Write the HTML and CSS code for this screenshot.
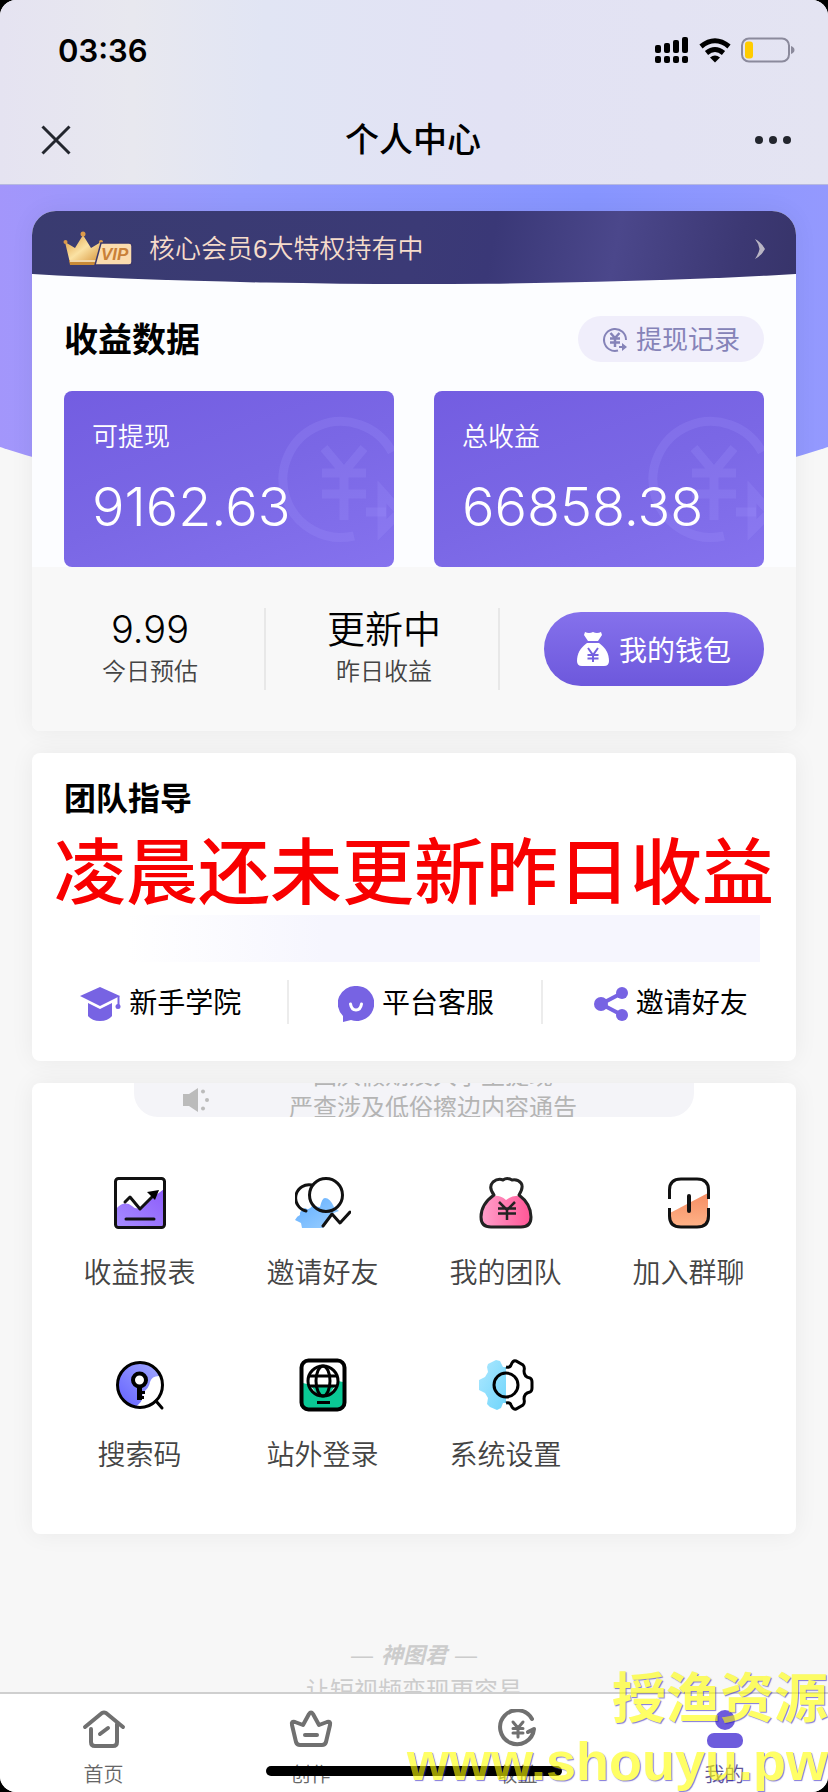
FILE: index.html
```html
<!DOCTYPE html>
<html lang="zh-CN">
<head>
    <meta charset="UTF-8">
    <meta name="viewport" content="width=device-width, initial-scale=1">
    <title>个人中心</title>
    <link rel="stylesheet" href="styles.css">
</head>
<body>
<div class="page">
    <header class="header">
        <div class="status-bar">
            <span class="time">03:36</span>
            <div class="status-icons">
                <svg width="34" height="27" viewBox="0 0 34 27">
                    <rect x="0" y="8" width="6" height="8" rx="2"/>
                    <rect x="9" y="6" width="6" height="10" rx="2"/>
                    <rect x="18" y="3" width="6" height="13" rx="2"/>
                    <rect x="27" y="0" width="6" height="16" rx="2"/>
                    <rect x="0" y="19" width="6" height="7" rx="2"/>
                    <rect x="9" y="19" width="6" height="7" rx="2"/>
                    <rect x="18" y="19" width="6" height="7" rx="2"/>
                    <rect x="27" y="19" width="6" height="7" rx="2"/>
                </svg>
                <svg width="32" height="25" viewBox="0 0 32 25">
                    <g fill="none" stroke="#000" stroke-width="5">
                        <path d="M2 8.500Q16 -3 30 8.500"/>
                        <path d="M7.500 15Q16 8 24.500 15"/>
                    </g>
                    <path d="M11 19.500Q16 15.500 21 19.500L16 24.500Z"/>
                </svg>
                <svg width="54" height="26" viewBox="0 0 54 26">
                    <rect x="1" y="1.500" width="47" height="23" rx="7" fill="none" stroke="#8b8a9c" stroke-width="2"/>
                    <rect x="4" y="4.500" width="8" height="17" rx="3" fill="#fc0"/>
                    <path d="M50 9q3.500 1.500 3.500 4t-3.500 4z" fill="#8b8a9c"/>
                </svg>
            </div>
        </div>
        <div class="nav-bar">
            <button class="nav-btn" type="button" aria-label="关闭">
                <svg width="32" height="32" viewBox="0 0 32 32"><path d="M2.500 2.500l27 27M29.500 2.500l-27 27" stroke="#23262e" stroke-width="3"/></svg>
            </button>
            <h1 class="nav-title">个人中心</h1>
            <button class="nav-btn" type="button" aria-label="更多">
                <svg width="38" height="10" viewBox="0 0 38 10" fill="#23262e"><circle cx="5" cy="5" r="4"/><circle cx="19" cy="5" r="4"/><circle cx="33" cy="5" r="4"/></svg>
            </button>
        </div>
    </header>

    <main class="content">
        <!-- 收益数据 -->
        <section class="card income">
            <a class="vip" href="#">
                <svg width="70" height="38" viewBox="0 0 70 38">
                    <defs>
                        <linearGradient id="gold" x1="0" y1="0" x2="1" y2="1">
                            <stop offset="0" stop-color="#dd9a3c"/>
                            <stop offset=".5" stop-color="#fbe2a4"/>
                            <stop offset="1" stop-color="#d59035"/>
                        </linearGradient>
                    </defs>
                    <path d="M2 12L12 18L20 5L28 18L38 12L33 33H7Z" fill="url(#gold)"/>
                    <path d="M6 30h28l-1 5H7z" fill="#c98a38"/>
                    <path d="M7 31h26" stroke="#fff1cf" stroke-width="1.500"/>
                    <circle cx="20" cy="4" r="2.500" fill="#dc9a4a"/>
                    <circle cx="2.500" cy="12" r="2" fill="#dc9a4a"/>
                    <circle cx="38" cy="12" r="2" fill="#dc9a4a"/>
                    <path d="M38 13h28q3 0 3 3v16q0 3-3 3H32z" fill="#fbdcae" stroke="#3a376c" stroke-width="1.500"/>
                    <text class="vip-mark" x="38" y="30">VIP</text>
                </svg>
                <span class="vip-text">核心会员6大特权持有中</span>
                <svg width="12" height="20" viewBox="0 0 12 20"><path d="M1 0Q7 3 11 10Q7 17 1 20Q5 14 5.500 10Q5 5 1 0Z" fill="#b9b5c4"/></svg>
            </a>
            <div class="income-body">
                <div class="income-head">
                    <h2 class="income-title">收益数据</h2>
                    <a class="record" href="#">
                        <svg width="26" height="26" viewBox="0 0 26 26" fill="none" stroke="#8583b8" stroke-width="2">
                            <path d="M16 23.500A11 11 0 1 1 24 13"/>
                            <path d="M8.500 6l4.500 5l4.500-5M13 11v9M8 11.500h10M8 15.500h10" stroke-width="2.500"/>
                            <path d="M17 20h4"/>
                            <path d="M20 16l5 4l-5 4z" fill="#8583b8" stroke="none"/>
                        </svg>
                        提现记录
                    </a>
                </div>
                <div class="amounts">
                    <div class="amount">
                        <svg class="amount-mark" width="116" height="130" viewBox="0 0 116 130">
                            <path d="M76 122A58 58 0 1 1 114 38"/>
                            <path d="M46 34l20 24l20-24M66 58v48M44 59h44M44 80h44"/>
                            <path d="M88 98h20"/>
                            <path d="M104 78v38l18-18z"/>
                        </svg>
                        <span class="amount-label">可提现</span>
                        <span class="amount-value">9162.63</span>
                    </div>
                    <div class="amount">
                        <svg class="amount-mark" width="116" height="130" viewBox="0 0 116 130">
                            <path d="M76 122A58 58 0 1 1 114 38"/>
                            <path d="M46 34l20 24l20-24M66 58v48M44 59h44M44 80h44"/>
                            <path d="M88 98h20"/>
                            <path d="M104 78v38l18-18z"/>
                        </svg>
                        <span class="amount-label">总收益</span>
                        <span class="amount-value">66858.38</span>
                    </div>
                </div>
            </div>
            <div class="stats">
                <div class="stat">
                    <span class="stat-value">9.99</span>
                    <span class="stat-label">今日预估</span>
                </div>
                <div class="stat">
                    <span class="stat-value">更新中</span>
                    <span class="stat-label">昨日收益</span>
                </div>
                <div class="wallet-box">
                    <button class="wallet" type="button">
                        <svg width="32" height="36" viewBox="0 0 32 36">
                            <path d="M8 1q4 2 8 0q4 2 8 0l1 3l-4 6H11L7 4z" fill="#fff"/>
                            <path d="M10 12h12c7 5 10 11 10 18q0 5-5 5H5q-5 0-5-5C0 23 3 17 10 12Z" fill="#fff"/>
                            <path d="M11 17l5 7l5-7M16 24v7M10.500 24h11M10.500 27.500h11" fill="none" stroke="#7562e0" stroke-width="2"/>
                        </svg>
                        我的钱包
                    </button>
                </div>
            </div>
        </section>

        <!-- 团队指导 -->
        <section class="card team">
            <h2 class="team-title">团队指导</h2>
            <p class="team-notice">凌晨还未更新昨日收益</p>
            <div class="team-strip"></div>
            <div class="links">
                <a class="link" href="#">
                    <svg width="42" height="36" viewBox="0 0 42 36" fill="#7763e3">
                        <path d="M21 1L41 10L21 20L1 10Z"/>
                        <path d="M9 17l12 6l12-6v13q-4 5-12 5t-12-5z"/>
                        <path d="M39.500 10v12" stroke="#7763e3" stroke-width="2"/>
                        <circle cx="39" cy="20.500" r="2.500"/>
                    </svg>
                    新手学院
                </a>
                <a class="link" href="#">
                    <svg width="36" height="36" viewBox="0 0 36 36">
                        <path d="M18 0A17.500 17.500 0 1 1 13 34L5 36V30A17.500 17.500 0 0 1 18 0Z" fill="#7763e3"/>
                        <path d="M12.500 18q1 6 5.500 6t5.500-6" fill="none" stroke="#fff" stroke-width="3" stroke-linecap="round"/>
                    </svg>
                    平台客服
                </a>
                <a class="link" href="#">
                    <svg width="34" height="36" viewBox="0 0 34 36" fill="#7763e3">
                        <path d="M28 7L7 18L28 29" fill="none" stroke="#7763e3" stroke-width="4"/>
                        <circle cx="28" cy="7" r="6"/><circle cx="7" cy="18" r="7"/><circle cx="28" cy="29" r="6"/>
                    </svg>
                    邀请好友
                </a>
            </div>
        </section>

        <!-- 功能菜单 -->
        <section class="card tools">
            <div class="ticker">
                <svg width="28" height="24" viewBox="0 0 28 24" fill="#bbb">
                    <path d="M1 6h6l9-6v24l-9-6H1z"/>
                    <circle cx="21" cy="3.500" r="2"/><circle cx="25" cy="12" r="2"/><circle cx="21" cy="20.500" r="2"/>
                </svg>
                <div class="ticker-list">
                    <span>国庆假期及大学生提现</span>
                    <span>严查涉及低俗擦边内容通告</span>
                </div>
            </div>
            <nav class="menu">
                <a class="menu-item" href="#">
                    <svg width="56" height="56" viewBox="0 0 56 56">
                        <defs>
                            <linearGradient id="violet" x1="0" y1="1" x2="1" y2="0"><stop offset="0" stop-color="#a68cff"/><stop offset="1" stop-color="#8d5cfa"/></linearGradient>
                        </defs>
                        <path d="M4 34Q12 25 20 31Q26 37 34 29T52 14V51H4Z" fill="url(#violet)"/>
                        <g fill="none" stroke="#111" stroke-width="3" stroke-linecap="round" stroke-linejoin="round">
                            <rect x="3.500" y="3.500" width="49" height="49" rx="3"/>
                            <path d="M13 27l5-5l10 12l15-15M14 44h28"/>
                        </g>
                        <path d="M35 17l12-2l-4 10z"/>
                    </svg>
                    收益报表
                </a>
                <a class="menu-item" href="#">
                    <svg width="56" height="56" viewBox="0 0 56 56">
                        <defs>
                            <linearGradient id="sky" x1="0" y1="0" x2="1" y2="1"><stop offset="0" stop-color="#60adff"/><stop offset="1" stop-color="#9cd0ff"/></linearGradient>
                        </defs>
                        <path d="M10 33q4 3 7-2l8 1q2-9 5-9q5 0 9 9l5 4l-8 3q-7 14-9 14H7l-1-5l-6-3q2-4 5-5q-1-4 5-7z" fill="url(#sky)"/>
                        <g fill="none" stroke="#111" stroke-width="3" stroke-linecap="round" stroke-linejoin="round">
                            <circle cx="31" cy="20" r="16.500"/>
                            <path d="M17 10A13 13 0 0 0 11 36M28 51l9-12l8 9l10-11"/>
                        </g>
                    </svg>
                    邀请好友
                </a>
                <a class="menu-item" href="#">
                    <svg width="56" height="56" viewBox="0 0 56 56">
                        <defs>
                            <linearGradient id="pink" x1="0" y1="0" x2="1" y2="0"><stop offset="0" stop-color="#ffa0cb"/><stop offset="1" stop-color="#ff5696"/></linearGradient>
                        </defs>
                        <path d="M15 21Q22 20 28 25Q34 20 42 21Q53 29 53 42Q53 52 43 52H13Q3 52 3 42Q3 29 15 21Z" fill="url(#pink)"/>
                        <path d="M16 20Q10 12 15 7Q20 3 25 5Q29 2 34 5Q40 4 43 8Q46 12 41 20Q53 29 53 42Q53 52 43 52H13Q3 52 3 42Q3 29 16 20Z" fill="none" stroke="#222" stroke-width="3" stroke-linejoin="round"/>
                        <path d="M21 27l8 8l8-8M29 35v10M20 33.500h18M20 38.500h18" fill="none" stroke="#222" stroke-width="2.500"/>
                    </svg>
                    我的团队
                </a>
                <a class="menu-item" href="#">
                    <svg width="56" height="56" viewBox="0 0 56 56">
                        <defs>
                            <linearGradient id="orange" x1="0" y1="0" x2="0" y2="1"><stop offset="0" stop-color="#f58d63"/><stop offset="1" stop-color="#ffb287"/></linearGradient>
                        </defs>
                        <path d="M9 38L47 18V40Q47 51 37 51H19Q9 51 9 41Z" fill="url(#orange)"/>
                        <g fill="none" stroke="#111" stroke-width="3">
                            <path d="M8.500 24V15Q8.500 4 20 4H36Q47.500 4 47.500 15V24M8.500 33V41Q8.500 52 20 52H36Q47.500 52 47.500 41V33"/>
                            <path d="M28 21V36" stroke-width="4" stroke-linecap="round"/>
                        </g>
                    </svg>
                    加入群聊
                </a>
                <a class="menu-item" href="#">
                    <svg width="56" height="56" viewBox="0 0 56 56">
                        <defs>
                            <linearGradient id="indigo" x1="0" y1="1" x2="1" y2="0"><stop offset="0" stop-color="#6461ff"/><stop offset="1" stop-color="#a2aaff"/></linearGradient>
                        </defs>
                        <path d="M23 50A22.500 22.500 0 1 1 49 19Q40 18 38 25Q37 32 30 36Q33 44 23 50Z" fill="url(#indigo)"/>
                        <circle cx="28" cy="28" r="22.500" fill="none" stroke="#000" stroke-width="3"/>
                        <path d="M44 44l6 7" stroke="#000" stroke-width="3" stroke-linecap="round"/>
                        <circle cx="27.500" cy="23" r="6.500" fill="#fff" stroke="#000" stroke-width="4"/>
                        <path d="M27.500 29v14" stroke="#000" stroke-width="5"/>
                        <path d="M28 35.500h5M28 40.500h4" stroke="#000" stroke-width="3"/>
                    </svg>
                    搜索码
                </a>
                <a class="menu-item" href="#">
                    <svg width="56" height="56" viewBox="0 0 56 56">
                        <path d="M8 26Q20 30 28 26T48 25V51H8Z" fill="#0ac895"/>
                        <rect x="6.500" y="3.500" width="43" height="49" rx="7" fill="none" stroke="#000" stroke-width="4"/>
                        <circle cx="28" cy="24" r="15" fill="#fff"/>
                        <path d="M16 29h24l-5 7q-7 5-14 0z" fill="#0ac895"/>
                        <g fill="none" stroke="#000" stroke-width="3">
                            <circle cx="28" cy="24" r="15"/>
                            <ellipse cx="28" cy="24" rx="7" ry="15"/>
                            <path d="M14 19h28M14 29h28M22 45.500h13"/>
                        </g>
                    </svg>
                    站外登录
                </a>
                <a class="menu-item" href="#">
                    <svg width="56" height="56" viewBox="0 0 56 56">
                        <defs>
                            <linearGradient id="cyan" x1="0" y1="0" x2="1" y2="1"><stop offset="0" stop-color="#aee8ff"/><stop offset="1" stop-color="#6fd5fb"/></linearGradient>
                        </defs>
                        <path d="M28 10H25L22 4L18 3L10 7L9 10L10 15L7 20L1 23V33L7 36L10 41L9 47L12 50L19 53L23 51L25 46H28Z" fill="url(#cyan)"/>
                        <path d="M28 10q4 1 5-2q2-5 5-4l7 4q2 2 1 6q0 6 6 7q2 1 2 4v6q0 3-2 4q-6 1-6 7q1 4-1 6l-7 4q-3 1-5-4q-1-3-5-2" fill="none" stroke="#000" stroke-width="3"/>
                        <circle cx="28" cy="28" r="12" fill="none" stroke="#000" stroke-width="3"/>
                    </svg>
                    系统设置
                </a>
            </nav>
        </section>

        <div class="slogan">
            <p class="brand"><span>—</span><em>神图君</em><span>—</span></p>
            <p class="tagline">让短视频变现更容易</p>
        </div>
    </main>

    <nav class="tab-bar">
        <a class="tab" href="#">
            <svg width="44" height="40" viewBox="0 0 44 40" fill="none" stroke="#707070" stroke-width="4" stroke-linecap="round" stroke-linejoin="round">
                <path d="M3 18L20 4q2-1 4 0L41 18M9 20V33q0 4 4 4H31q4 0 4-4V15M18 25l8-6"/>
            </svg>
            首页
        </a>
        <a class="tab" href="#">
            <svg width="44" height="40" viewBox="0 0 44 40" fill="none" stroke="#707070" stroke-width="4" stroke-linecap="round" stroke-linejoin="round">
                <path d="M3 16q-1-4 3-3l8 3l6-11q2-3 4 0l6 11l8-3q4-1 3 3L37 33q-1 3-4 3H11q-3 0-4-3Z"/>
                <path d="M16 26h12"/>
            </svg>
            创作
        </a>
        <a class="tab" href="#">
            <svg width="44" height="40" viewBox="0 0 44 40" fill="none" stroke="#707070" stroke-width="4" stroke-linecap="round" stroke-linejoin="round">
                <path d="M36 10A17 17 0 1 0 38 20L32 23"/>
                <path d="M17 13l5 6l5-6M22 19v9M17 19.500h10M17 24h10" stroke-width="3"/>
            </svg>
            收益
        </a>
        <a class="tab active" href="#">
            <svg width="44" height="40" viewBox="0 0 44 40" fill="#6d5bdc">
                <circle cx="22" cy="11" r="10"/>
                <rect x="4" y="24" width="36" height="15" rx="7"/>
            </svg>
            我的
        </a>
        <div class="home-indicator"></div>
    </nav>

    <div class="watermark">
        <span>授渔资源</span>
        <span>www.shouyu.pw</span>
    </div>
</div>
</body>
</html>
```
FILE: styles.css
```css
* {
    box-sizing: border-box;
}
body {
    margin: 0;
    background-color: #000;
    color: #000;
    font-family: "Liberation Sans", "Noto Sans CJK SC", sans-serif;
}
h1, h2, p {
    margin: 0;
}
a {
    color: inherit;
    text-decoration: none;
}
button {
    padding: 0;
    border: 0;
    background: none;
    font-family: inherit;
}
svg {
    display: block;
    flex: none;
}
.page {
    position: relative;
    display: flex;
    flex-direction: column;
    height: 100vh;
    overflow: hidden;
    border-radius: 16px;
    background-color: #f7f7f7;
}

/* 顶部 */
.header {
    flex: none;
    background: linear-gradient(90deg, #e5e3f1 0%, #e8e8ef 16%, #e1e5f4 32%, #e2e2f4 60%, #e4e4f2 100%);
    border-bottom: 1px solid #b6b8e0;
}
.status-bar {
    display: flex;
    justify-content: space-between;
    align-items: center;
    height: 100px;
    padding: 0 33px 0 58px;
}
.time {
    font-family: Inter, "Liberation Sans", sans-serif;
    font-size: 31px;
    font-weight: 600;
}
.status-icons {
    display: flex;
    align-items: center;
    gap: 10px;
}
.nav-bar {
    display: flex;
    justify-content: space-between;
    align-items: center;
    height: 84px;
    padding: 0 36px 4px 40px;
}
.nav-title {
    font-size: 34px;
    font-weight: 500;
    line-height: 48px;
}

/* 内容 */
.content {
    position: relative;
    flex: 1;
    min-height: 0;
    overflow: hidden;
    padding: 26px 32px 0;
}
.content::before {
    content: "";
    position: absolute;
    top: 0;
    left: -20%;
    width: 140%;
    height: 319px;
    border-radius: 0 0 50% 50% / 0 0 190px 190px;
    background: linear-gradient(90deg, #a396fb 14%, #939afe 35%, #8795ff 65%, #9499fe 86%);
}
.card {
    position: relative;
    margin-bottom: 22px;
    border-radius: 8px;
    background-color: #fff;
    box-shadow: 0 0 24px rgba(0, 0, 0, 0.06);
}

.income {
    border-radius: 24px 24px 8px 8px;
    background-color: #fcfdff;
}
.vip {
    display: flex;
    align-items: center;
    gap: 16px;
    height: 73px;
    padding: 2px 30px 0 31px;
    border-radius: 24px 24px 0 0;
    background: linear-gradient(100deg, #393b70 0%, #3b3a76 50%, #3a3877 60%, #4b478b 76%, #3c3873 92%, #37346a 100%);
    color: #f6dccb;
    clip-path: ellipse(99% 100% at 50% 0);
}
.vip-mark {
    fill: #c98038;
    font-size: 17px;
    font-style: italic;
    font-weight: bold;
}
.vip-text {
    flex: 1;
    font-size: 26px;
    font-weight: 350;
    line-height: 40px;
}
.income-body {
    padding: 32px 32px 0;
}
.income-head {
    display: flex;
    justify-content: space-between;
    align-items: center;
    margin-bottom: 29px;
}
.income-title {
    padding-top: 2px;
    font-size: 34px;
    line-height: 44px;
}
.record {
    display: flex;
    align-items: center;
    gap: 8px;
    padding: 2px 24px 0;
    border-radius: 23px;
    background-color: #f0eefb;
    color: #8583b8;
    font-size: 26px;
    line-height: 44px;
}
.amounts {
    display: grid;
    grid-template-columns: 1fr 1fr;
    gap: 40px;
}
.amount {
    position: relative;
    display: flex;
    flex-direction: column;
    gap: 18px;
    height: 176px;
    padding: 26px 28px;
    overflow: hidden;
    border-radius: 8px;
    background: linear-gradient(160deg, #735de1, #7a67e5 50%, #8572ee);
    color: #fff;
}
.amount-mark {
    position: absolute;
    top: 23px;
    right: 0;
    fill: none;
    stroke: rgba(160, 145, 250, 0.24);
    stroke-width: 9;
}
.amount-label {
    font-size: 26px;
    font-weight: 350;
    line-height: 40px;
}
.amount-value {
    position: relative;
    font-family: Inter, "Liberation Sans", sans-serif;
    font-size: 54px;
    font-weight: 300;
    line-height: 64px;
}
.stats {
    display: grid;
    grid-template-columns: 1fr 1fr 296px;
    align-items: center;
    padding: 41px 0 41px;
    border-radius: 0 0 8px 8px;
    background-color: #f8f8f8;
}
.stat {
    display: flex;
    flex-direction: column;
    align-items: center;
    gap: 4px;
    padding-left: 4px;
    border-right: 2px solid #e8e8e8;
}
.stat-value {
    font-family: Inter, "Noto Sans CJK SC", sans-serif;
    font-size: 38px;
    font-weight: 350;
    line-height: 42px;
}
.stat-label {
    color: #444;
    font-size: 24px;
    font-weight: 350;
    line-height: 36px;
}
.wallet-box {
    padding: 0 32px 0 44px;
}
.wallet {
    display: flex;
    justify-content: center;
    align-items: center;
    gap: 10px;
    width: 100%;
    height: 74px;
    border-radius: 37px;
    background: linear-gradient(#8571ec, #6d58dc);
    color: #fff;
    font-size: 28px;
}

/* 团队 */
.team {
    padding: 26px 0 37px;
}
.team-title {
    padding: 0 32px;
    font-size: 32px;
    line-height: 40px;
}
.team-notice {
    margin-top: 12px;
    color: #f80000;
    font-size: 72px;
    font-weight: 500;
    line-height: 84px;
    text-align: center;
    white-space: nowrap;
}
.team-strip {
    height: 47px;
    margin: 0 36px 18px 56px;
    background: linear-gradient(90deg, #fff 6%, #f6f6fe 35%);
}
.links {
    display: grid;
    grid-template-columns: 1fr 1fr 1fr;
}
.link {
    display: flex;
    justify-content: center;
    align-items: center;
    gap: 8px;
    padding: 4px 0 0 2px;
    font-size: 28px;
    line-height: 40px;
}
.link + .link {
    border-left: 2px solid #ececec;
}

/* 菜单 */
.ticker {
    display: flex;
    align-items: center;
    height: 34px;
    margin: 0 102px;
    padding: 0 44px 0 48px;
    overflow: hidden;
    border-radius: 0 0 24px 24px;
    background-color: #f4f4f8;
    color: #b4b4b4;
}
.ticker-list {
    display: flex;
    flex: 1;
    flex-direction: column;
    justify-content: flex-end;
    height: 48px;
    padding-left: 6px;
    font-size: 24px;
    line-height: 32px;
    text-align: center;
}
.menu {
    display: grid;
    grid-template-columns: repeat(4, 1fr);
    row-gap: 63px;
    padding: 58px 16px;
}
.menu-item {
    display: flex;
    flex-direction: column;
    align-items: center;
    gap: 23px;
    color: #444;
    font-size: 28px;
    font-weight: 350;
    line-height: 40px;
}

.slogan {
    position: relative;
    margin-top: 104px;
    color: #ccc;
    text-align: center;
}
.brand {
    display: flex;
    justify-content: center;
    gap: 8px;
    font-size: 22px;
    line-height: 36px;
}
.brand em {
    font-weight: bold;
}
.tagline {
    font-size: 24px;
    line-height: 34px;
}

/* 底部导航 */
.tab-bar {
    position: relative;
    display: grid;
    flex: none;
    grid-template-columns: repeat(4, 1fr);
    height: 100px;
    padding-top: 15px;
    border-top: 2px solid #cfcfcf;
    background-color: #fff;
}
.tab {
    display: flex;
    flex-direction: column;
    align-items: center;
    gap: 10px;
    color: #666;
    font-size: 20px;
    font-weight: 350;
    line-height: 32px;
}
.tab.active {
    color: #5f5699;
}
.home-indicator {
    position: absolute;
    bottom: 16px;
    left: 50%;
    width: 296px;
    height: 10px;
    margin-left: -148px;
    border-radius: 5px;
    background-color: #000;
}
.watermark {
    position: absolute;
    right: 0;
    bottom: 0;
    display: flex;
    flex-direction: column;
    align-items: flex-end;
    color: #ff0;
    font-size: 54px;
    font-weight: bold;
    line-height: 62px;
    text-shadow: 1px 1px 1px #3020c0;
    opacity: 0.6;
    pointer-events: none;
}
```
